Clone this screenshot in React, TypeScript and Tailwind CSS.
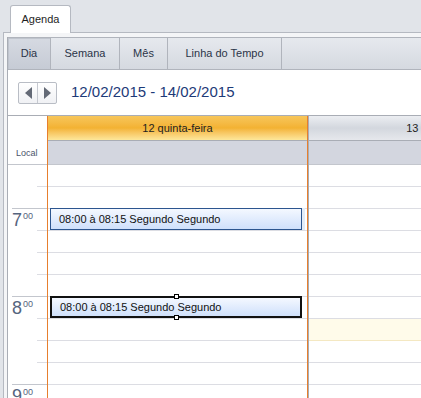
import React from "react";

const slots = Array.from({ length: 11 }, (_, i) => i);
// index of slot whose top sits right under an hour line
const hourAt: Record<number, string> = { 2: "7", 6: "8", 10: "9" };

function TimeColumn() {
  return (
    <div className="w-[39px] shrink-0 bg-white flex flex-col">
      <div className="h-[49px] shrink-0 border-b border-[#c3c6cd] flex items-end pb-[4px] pl-[8px]">
        <span className="text-[9px] text-[#4a556b]">Local</span>
      </div>
      {slots.map((i) => {
        const hourLine = hourAt[i + 1] !== undefined;
        return (
          <div key={i} className="h-[22px] shrink-0 flex flex-col relative">
            <div className="flex-1 flex items-start pl-[4px] pt-[2px]">
              {hourAt[i] && (
                <span className="text-[#55647e] leading-none flex items-start">
                  <span className="text-[18px] leading-none">{hourAt[i]}</span>
                  <span className="text-[9px] leading-none mt-[1px] ml-[1px]">00</span>
                </span>
              )}
            </div>
            <div className={hourLine ? "h-px ml-[4px] bg-[#c3c6cd]" : "h-px ml-[29px] bg-[#dcdde3]"} />
          </div>
        );
      })}
    </div>
  );
}

function Appointment({ top, selected }: { top: number; selected?: boolean }) {
  return (
    <div
      className={
        "absolute left-[2px] w-[252px] h-[22px] flex items-center pl-[8px] text-[11px] text-[#111] bg-gradient-to-b from-[#f4f8ff] to-[#cfe0fb] " +
        (selected ? "border-2 border-[#111]" : "border border-[#2c558f] shadow-[3px_0_0_#e3ecf8]")
      }
      style={{ top }}
    >
      08:00 à 08:15 Segundo Segundo
      {selected && (
        <>
          <span className="absolute left-[122px] -top-[4px] w-[5px] h-[5px] bg-white border border-black" />
          <span className="absolute left-[122px] -bottom-[4px] w-[5px] h-[5px] bg-white border border-black" />
        </>
      )}
    </div>
  );
}

function DayColumn() {
  return (
    <div className="w-[261px] shrink-0 border-x border-[#e77f2e] flex flex-col">
      <div className="h-[25px] shrink-0 bg-gradient-to-b from-[#f7c65a] via-[#f3b232] to-[#fde79a] flex items-center justify-center text-[11px] text-[#1f1f1f] border-b border-[#a9adb5]">
        12 quinta-feira
      </div>
      <div className="h-[24px] shrink-0 bg-[#d3d6df] border-b border-[#c3c6cd]" />
      <div className="relative flex flex-col shrink-0 bg-white">
        {slots.map((i) => (
          <div key={i} className="h-[22px] shrink-0 border-b border-[#dcdde3]" />
        ))}
        <Appointment top={43} />
        <Appointment top={131} selected />
      </div>
    </div>
  );
}

function NextColumn() {
  return (
    <div className="flex-1 min-w-0 border-l border-[#a9adb5] flex flex-col overflow-hidden">
      <div className="h-[25px] shrink-0 w-[261px] bg-gradient-to-b from-[#eceef2] via-[#d3d7de] to-[#e6e8ec] flex items-center justify-center text-[11px] text-[#1f1f1f] border-b border-[#a9adb5] whitespace-nowrap">
        13 sexta-feira
      </div>
      <div className="h-[24px] shrink-0 bg-[#d3d6df] border-b border-[#c3c6cd]" />
      <div className="flex flex-col shrink-0 bg-white">
        {slots.map((i) => (
          <div
            key={i}
            className={
              "h-[22px] shrink-0 border-b " +
              (i === 7 ? "bg-[#fffbea] border-[#f4e8c2]" : "border-[#dcdde3]")
            }
          />
        ))}
      </div>
    </div>
  );
}

export default function App() {
  const views = [
    { label: "Dia", w: "w-[43px]", active: true },
    { label: "Semana", w: "w-[69px]" },
    { label: "Mês", w: "w-[48px]" },
    { label: "Linha do Tempo", w: "w-[114px]" },
  ];

  return (
    <div className="w-[421px] h-[398px] overflow-hidden bg-[#e1e4e9] flex flex-col font-['Liberation_Sans',Arial,sans-serif]">
      {/* page tab */}
      <div className="h-[32px] shrink-0 pl-[10px] pt-[5px] flex">
        <div className="w-[61px] h-[28px] bg-white border border-b-0 border-[#b5b9c1] rounded-t-[3px] flex items-center justify-center text-[11px] text-[#1e1e1e] relative z-10">
          Agenda
        </div>
      </div>

      {/* panel */}
      <div className="flex-1 min-h-0 ml-[3px] border-l border-t border-[#b5b9c1] bg-[#f4f5f7] pl-[3px] pt-[4px] flex">
        <div className="flex-1 min-w-0 border-l border-[#a9adb5] flex flex-col bg-white">
          {/* view tabs */}
          <div className="h-[33px] shrink-0 flex border-y border-[#b0b4bc] bg-gradient-to-b from-[#e6e9ee] to-[#d5d9e0]">
            {views.map((v) => (
              <div
                key={v.label}
                className={
                  v.w +
                  " shrink-0 flex items-center justify-center text-[11px] text-[#2b3447] border-r border-[#b0b4bc] " +
                  (v.active ? "bg-gradient-to-b from-[#d6dae2] to-[#c6cbd5] shadow-[inset_1px_1px_0_#bfc4cd]" : "")
                }
              >
                {v.label}
              </div>
            ))}
          </div>

          {/* toolbar */}
          <div className="h-[45px] shrink-0 flex items-center pl-[10px] gap-[14px]">
            <div className="flex h-[22px] border border-[#b9bdc5] rounded-[2px] bg-gradient-to-b from-white to-[#f0f1f4]">
              <div className="w-[19px] flex items-center justify-center border-r border-[#c6c9d0]">
                <svg width="7" height="12" viewBox="0 0 7 12"><path d="M7 0 L0 6 L7 12 Z" fill="#646a76" /></svg>
              </div>
              <div className="w-[18px] flex items-center justify-center">
                <svg width="7" height="12" viewBox="0 0 7 12"><path d="M0 0 L7 6 L0 12 Z" fill="#646a76" /></svg>
              </div>
            </div>
            <span className="text-[15px] text-[#1d3a78]">12/02/2015 - 14/02/2015</span>
          </div>

          {/* schedule */}
          <div className="flex-1 min-h-0 flex overflow-hidden border-t border-[#a9adb5]">
            <TimeColumn />
            <DayColumn />
            <NextColumn />
          </div>
        </div>
      </div>
    </div>
  );
}
